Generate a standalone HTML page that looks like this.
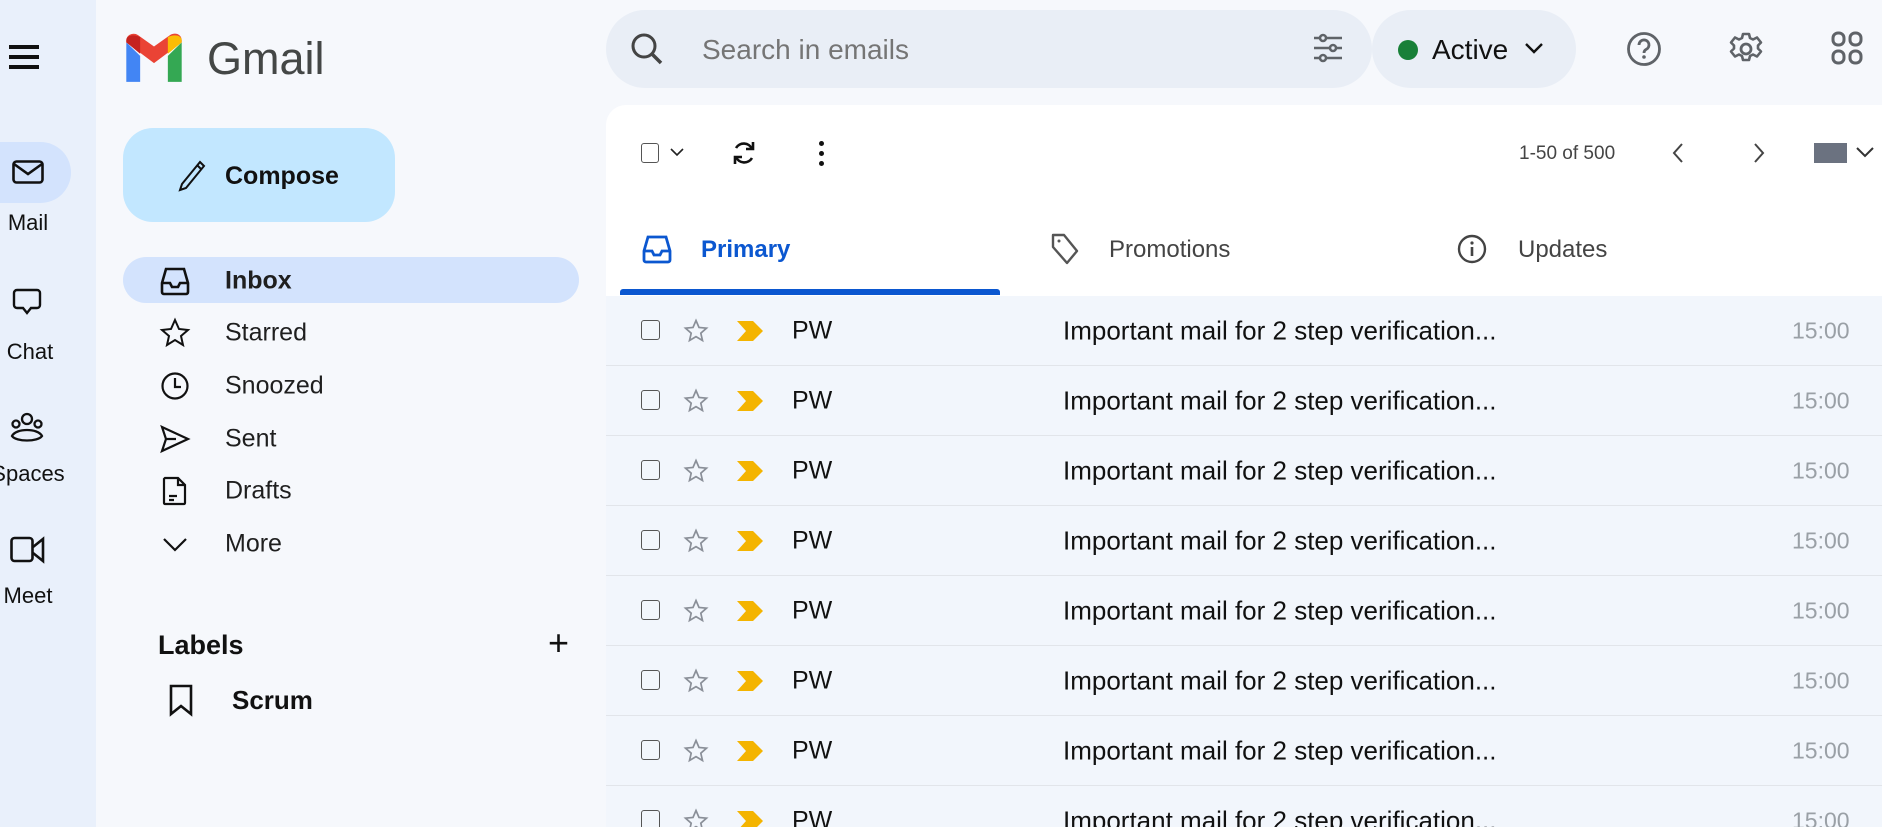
<!DOCTYPE html>
<html style="overflow:hidden;height:827px"><head><meta charset="utf-8"><style>
*{margin:0;padding:0;box-sizing:border-box}
html,body{width:1882px;height:827px;overflow:hidden}
body{background:#f6f8fc;font-family:"Liberation Sans",sans-serif;color:#1f1f1f;position:relative}
.a{position:absolute}
.rail{left:0;top:0;width:96px;height:827px;background:#e9f0fb}
.rl{position:absolute;width:96px;left:0;text-align:center;font-size:22px;color:#111}
.nav{position:absolute;left:225px;font-size:25px;color:#1f1f1f;transform:translateY(-50%)}
.ni{position:absolute;left:160px;width:30px;height:30px;transform:translateY(-50%)}
svg{overflow:visible}
.row{position:absolute;left:0;width:1276px;height:70px;border-bottom:1px solid #e2e5ea;background:#f2f6fc}
.row span{position:absolute;top:50%;transform:translateY(-50%);font-size:25px}
</style></head><body>
<div class="a rail"></div>
<div class="a" style="left:9px;top:45px;width:30px;height:4px;background:#111;box-shadow:0 10px 0 #111,0 20px 0 #111"></div>
<div class="a" style="left:0;top:142px;width:71px;height:61px;background:#d3e3fd;border-radius:0 31px 31px 0"></div>
<svg class="a" style="left:12px;top:160px" width="32" height="24" viewBox="0 0 32 24"><rect x="1.5" y="1.5" width="29" height="21" rx="3" fill="none" stroke="#111" stroke-width="2.6"/><path d="M2 4 L16 14 L30 4" fill="none" stroke="#111" stroke-width="2.6"/></svg>
<div class="rl" style="top:210px;left:-20px;width:96px">Mail</div>
<svg class="a" style="left:12px;top:288px" width="30" height="30" viewBox="0 0 30 30"><path d="M5 2h20a3 3 0 0 1 3 3v12a3 3 0 0 1-3 3h-6l-4 5-4-5H5a3 3 0 0 1-3-3V5a3 3 0 0 1 3-3z" fill="none" stroke="#111" stroke-width="2.4"/></svg>
<div class="rl" style="top:339px;left:-18px">Chat</div>
<svg class="a" style="left:9px;top:412px" width="36" height="32" viewBox="0 0 36 32"><g fill="none" stroke="#111" stroke-width="2.3"><circle cx="18" cy="7" r="5"/><circle cx="7" cy="12" r="3.5"/><circle cx="29" cy="12" r="3.5"/><path d="M3 24c4-8 26-8 30 0c-4 6-26 6-30 0z"/></g></svg>
<div class="rl" style="top:461px;left:-20px">Spaces</div>
<svg class="a" style="left:10px;top:536px" width="36" height="28" viewBox="0 0 36 28"><g fill="none" stroke="#111" stroke-width="2.6"><rect x="1.5" y="2" width="21" height="23" rx="3"/><path d="M23 11l10-8v22l-10-8"/></g></svg>
<div class="rl" style="top:583px;left:-20px">Meet</div>

<svg class="a" style="left:124px;top:34px" width="60" height="50" viewBox="0 0 52 48" preserveAspectRatio="none"><path d="M2 8v38h12V21z" fill="#4285f4"/><path d="M38 21v25h12V8z" fill="#34a853"/><path d="M2 8l24 20 24-20v-2c0-6-6-8-10-5L26 12 12 1C8-2 2 1 2 6z" fill="#ea4335"/><path d="M2 6v2l12 11V3C9 0 2 1 2 6z" fill="#c5221f"/><path d="M38 3v16l12-11V6c0-5-7-6-12-3z" fill="#fbbc04"/></svg>
<div class="a" style="left:207px;top:33px;font-size:45px;color:#444746">Gmail</div>

<div class="a" style="left:123px;top:128px;width:272px;height:94px;background:#c2e7ff;border-radius:30px"></div>
<svg class="a" style="left:178px;top:160px" width="28" height="32" viewBox="0 0 28 32"><path d="M22 2l4 4L8 28l-6 2 2-6z M19 5l4 4" fill="none" stroke="#111" stroke-width="2"/></svg>
<div class="a" style="left:225px;top:162px;font-size:25px;font-weight:bold;color:#111">Compose</div>

<div class="a" style="left:123px;top:257px;width:456px;height:46px;background:#d3e3fd;border-radius:23px"></div>
<svg class="ni" style="top:281px" viewBox="0 0 30 30"><path d="M6 3h18l4 14v9a2 2 0 0 1-2 2H4a2 2 0 0 1-2-2v-9z M2 17h8l2 4h6l2-4h8" fill="none" stroke="#111" stroke-width="2.6"/></svg>
<div class="nav" style="top:281px;font-weight:bold">Inbox</div>
<svg class="ni" style="top:333px" viewBox="0 0 30 30"><path d="M15 2l4 9 9 1-7 6 2 9-8-5-8 5 2-9-7-6 9-1z" fill="none" stroke="#111" stroke-width="2"/></svg>
<div class="nav" style="top:333px">Starred</div>
<svg class="ni" style="top:386px" viewBox="0 0 30 30"><circle cx="15" cy="15" r="12.5" fill="none" stroke="#111" stroke-width="2.2"/><path d="M15 7v9h6" fill="none" stroke="#111" stroke-width="2.2"/></svg>
<div class="nav" style="top:386px">Snoozed</div>
<svg class="ni" style="top:439px" viewBox="0 0 30 30"><path d="M2 3l26 12L2 27l4-12z M6 15h10" fill="none" stroke="#111" stroke-width="2.2"/></svg>
<div class="nav" style="top:439px">Sent</div>
<svg class="ni" style="top:491px" viewBox="0 0 30 30"><path d="M5 2h13l7 7v18a1 1 0 0 1-1 1H5a1 1 0 0 1-1-1V3z M18 2v7h7 M9 20h8 M9 24h5" fill="none" stroke="#111" stroke-width="2.2"/></svg>
<div class="nav" style="top:491px">Drafts</div>
<svg class="ni" style="top:544px" viewBox="0 0 30 30"><path d="M4 10l11 11 11-11" fill="none" stroke="#111" stroke-width="2.2"/></svg>
<div class="nav" style="top:544px">More</div>
<div class="a" style="left:158px;top:630px;font-size:27px;font-weight:bold;color:#111">Labels</div>
<div class="a" style="left:548px;top:622px;font-size:36px;color:#111">+</div>
<svg class="a" style="left:168px;top:684px" width="26" height="32" viewBox="0 0 26 32"><path d="M3 2h20v28l-10-8-10 8z" fill="none" stroke="#111" stroke-width="2.6"/></svg>
<div class="a" style="left:232px;top:685px;font-size:26px;font-weight:bold;color:#111">Scrum</div>

<div class="a" style="left:606px;top:10px;width:766px;height:78px;background:#e9eef6;border-radius:39px"></div>
<svg class="a" style="left:630px;top:32px" width="34" height="34" viewBox="0 0 34 34"><circle cx="14" cy="14" r="11" fill="none" stroke="#444" stroke-width="3"/><path d="M22 22l9 9" stroke="#444" stroke-width="3.5"/></svg>
<div class="a" style="left:702px;top:34px;font-size:28px;color:#757575">Search in emails</div>
<svg class="a" style="left:1313px;top:33px" width="30" height="30" viewBox="0 0 30 30"><g stroke="#5f6368" stroke-width="2.6" fill="#e9eef6"><path d="M1 5h28M1 15h28M1 25h28"/><circle cx="10" cy="5" r="3"/><circle cx="20" cy="15" r="3"/><circle cx="10" cy="25" r="3"/></g></svg>
<div class="a" style="left:1372px;top:10px;width:204px;height:78px;background:#e9eef6;border-radius:39px"></div>
<div class="a" style="left:1398px;top:40px;width:20px;height:20px;border-radius:50%;background:#188038"></div>
<div class="a" style="left:1432px;top:34px;font-size:28px;color:#111">Active</div>
<svg class="a" style="left:1524px;top:42px" width="20" height="12" viewBox="0 0 20 12"><path d="M2 2l8 8 8-8" fill="none" stroke="#111" stroke-width="2.4"/></svg>
<svg class="a" style="left:1626px;top:31px" width="36" height="36" viewBox="0 0 36 36"><circle cx="18" cy="18" r="15.5" fill="none" stroke="#5f6368" stroke-width="2.8"/><path d="M13 14a5 5 0 1 1 7 4.5c-1.5.8-2 1.8-2 3.5" fill="none" stroke="#5f6368" stroke-width="2.8"/><circle cx="18" cy="26" r="1.8" fill="#5f6368"/></svg>
<svg class="a" style="left:1728px;top:31px" width="36" height="36" viewBox="0 0 36 36"><circle cx="18" cy="18" r="5" fill="none" stroke="#5f6368" stroke-width="2.8"/><path d="M15 3h6l1 4 3 1.5 4-2 4 5-3 3v3l3 3-4 5-4-2-3 1.5-1 4h-6l-1-4-3-1.5-4 2-4-5 3-3v-3l-3-3 4-5 4 2 3-1.5z" fill="none" stroke="#5f6368" stroke-width="2.6" stroke-linejoin="round"/></svg>
<svg class="a" style="left:1831px;top:31px" width="32" height="34" viewBox="0 0 32 34"><g fill="none" stroke="#5f6368" stroke-width="3"><rect x="2" y="2" width="11" height="12" rx="5"/><rect x="19" y="2" width="11" height="12" rx="5"/><rect x="2" y="20" width="11" height="12" rx="5"/><rect x="19" y="20" width="11" height="12" rx="5"/></g></svg>

<div class="a" style="left:606px;top:105px;width:1276px;height:722px;background:#fff;border-radius:20px 0 0 0"></div>
<div class="a" style="left:641px;top:143px;width:18px;height:20px;border:1.6px solid #555;border-radius:3px"></div>
<svg class="a" style="left:670px;top:148px" width="14" height="9" viewBox="0 0 14 9"><path d="M1 1l6 6 6-6" fill="none" stroke="#222" stroke-width="1.6"/></svg>
<svg class="a" style="left:731px;top:140px" width="26" height="26" viewBox="0 0 26 26"><path d="M21 9a9 9 0 0 0-16-1M5 17a9 9 0 0 0 16 1" fill="none" stroke="#111" stroke-width="2.6"/><path d="M22 2v7h-7M4 24v-7h7" fill="none" stroke="#111" stroke-width="2.6"/></svg>
<div class="a" style="left:819px;top:141px;width:5px;height:5px;border-radius:50%;background:#111;box-shadow:0 10px 0 #111,0 20px 0 #111"></div>
<div class="a" style="left:1519px;top:143px;font-size:19px;color:#444">1-50 of 500</div>
<svg class="a" style="left:1671px;top:142px" width="14" height="22" viewBox="0 0 14 22"><path d="M11 2L3 11l8 9" fill="none" stroke="#444" stroke-width="2"/></svg>
<svg class="a" style="left:1752px;top:142px" width="14" height="22" viewBox="0 0 14 22"><path d="M3 2l8 9-8 9" fill="none" stroke="#444" stroke-width="2"/></svg>
<div class="a" style="left:1814px;top:143px;width:33px;height:20px;background:#6b7280"></div>
<svg class="a" style="left:1856px;top:147px" width="18" height="11" viewBox="0 0 18 11"><path d="M1 1l8 8 8-8" fill="none" stroke="#333" stroke-width="2"/></svg>

<svg class="a" style="left:642px;top:234px" width="30" height="30" viewBox="0 0 30 30"><path d="M6 3h18l4 14v9a2 2 0 0 1-2 2H4a2 2 0 0 1-2-2v-9z M2 17h8l2 4h6l2-4h8" fill="none" stroke="#0b57d0" stroke-width="2.8"/></svg>
<div class="a" style="left:701px;top:236px;font-size:24px;color:#0b57d0;font-weight:bold">Primary</div>
<svg class="a" style="left:1050px;top:232px" width="30" height="34" viewBox="0 0 30 34"><path d="M3 3h11l13 16-10 12L3 15z" fill="none" stroke="#555" stroke-width="2.4" stroke-linejoin="round"/><circle cx="9" cy="9" r="1.5" fill="#555"/></svg>
<div class="a" style="left:1109px;top:236px;font-size:24px;color:#444">Promotions</div>
<svg class="a" style="left:1457px;top:234px" width="30" height="30" viewBox="0 0 30 30"><circle cx="15" cy="15" r="13" fill="none" stroke="#444" stroke-width="2.4"/><path d="M15 13v9" stroke="#444" stroke-width="2.6"/><circle cx="15" cy="9" r="1.6" fill="#444"/></svg>
<div class="a" style="left:1518px;top:236px;font-size:24px;color:#444">Updates</div>
<div class="a" style="left:620px;top:289px;width:380px;height:6px;background:#0b57d0;border-radius:3px 3px 0 0"></div>

<div class="a" id="rows" style="left:606px;top:296px;width:1276px;height:531px;overflow:hidden"></div>
<script>
var h='';for(var i=0;i<8;i++){var t=i*70;h+='<div class="row" style="top:'+t+'px"><div style="position:absolute;left:35px;top:24px;width:19px;height:20px;border:1.6px solid #555;border-radius:3px"></div><svg style="position:absolute;left:78px;top:23px" width="24" height="23" viewBox="0 0 24 23"><path d="M12 1.5l3 7 7.5.7-5.7 5 1.7 7.3L12 17.6 5.5 21.5l1.7-7.3-5.7-5 7.5-.7z" fill="none" stroke="#8a8f98" stroke-width="1.7"/></svg><svg style="position:absolute;left:131px;top:25px" width="26" height="20" viewBox="0 0 26 20"><path d="M0 0h16l10 10-10 10H0l9-10z" fill="#f4b400"/></svg><span style="left:186px;color:#111">PW</span><span style="left:457px;color:#111;font-size:26px">Important mail for 2 step verification...</span><span style="left:1186px;color:#9aa0a6;font-size:23px">15:00</span></div>';}
document.getElementById('rows').innerHTML=h;
</script>
</body></html>
